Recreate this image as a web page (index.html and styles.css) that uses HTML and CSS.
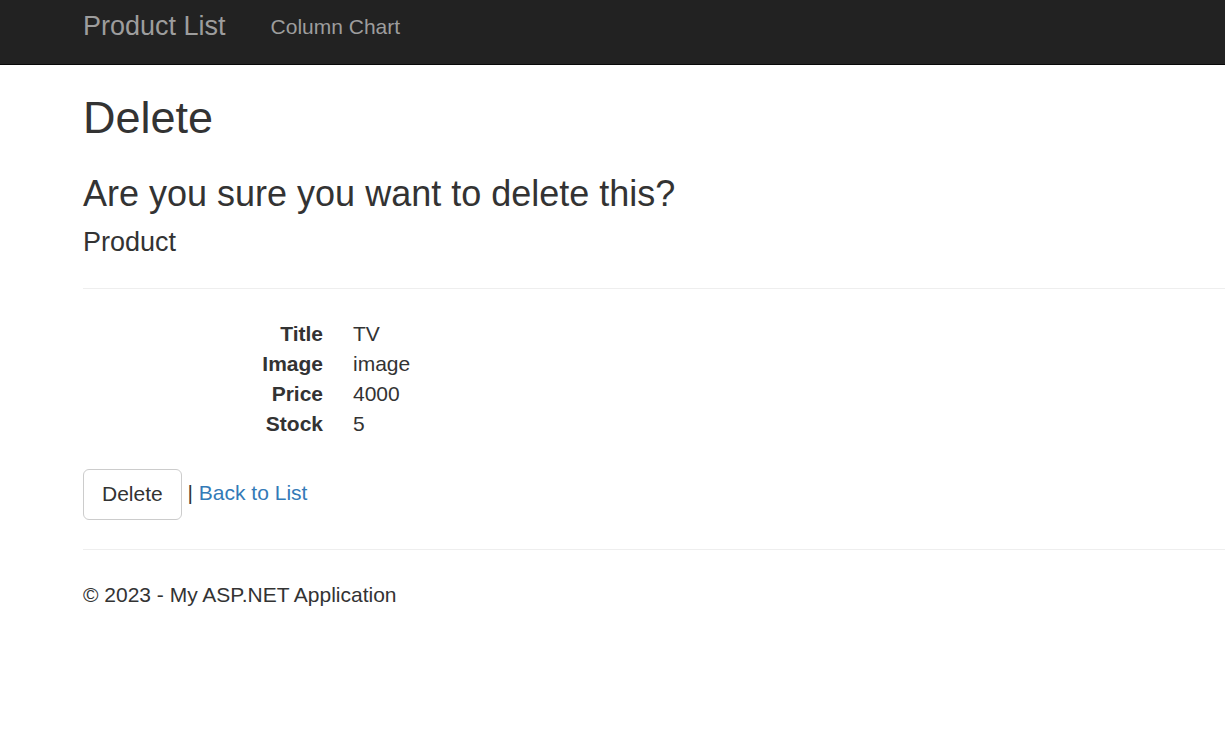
FILE: index.html
```html
<!DOCTYPE html>
<html>
<head>
<meta charset="utf-8">
<title>Delete</title>
<link rel="stylesheet" href="styles.css">
</head>
<body>
<div class="navbar">
  <div class="nav-inner">
    <a class="brand" href="#">Product List</a>
    <a class="nav-link" href="#">Column Chart</a>
  </div>
</div>
<div class="body-content">
  <h2 class="title">Delete</h2>
  <h3 class="question">Are you sure you want to delete this?</h3>
  <div>
    <h4 class="entity">Product</h4>
    <hr class="rule">
    <dl class="details">
      <dt>Title</dt><dd>TV</dd>
      <dt>Image</dt><dd>image</dd>
      <dt>Price</dt><dd>4000</dd>
      <dt>Stock</dt><dd>5</dd>
    </dl>
    <form class="actions">
      <button type="button" class="btn">Delete</button> | <a class="link" href="#">Back to List</a>
    </form>
  </div>
  <hr class="rule rule-footer">
  <footer class="footer">
    <p>&copy; 2023 - My ASP.NET Application</p>
  </footer>
</div>
</body>
</html>
```

FILE: styles.css
```css
* { box-sizing: border-box; }
html, body { margin: 0; padding: 0; }
body {
  font-family: "Liberation Sans", Arial, Helvetica, sans-serif;
  font-size: 21px;
  line-height: 30px;
  color: #333;
  background: #fff;
}
.navbar {
  background: #222;
  height: 65px;
  border-bottom: 1px solid #080808;
}
.nav-inner {
  display: flex;
  align-items: flex-start;
  height: 64px;
  padding-left: 83px;
  padding-top: 11px;
}
.brand {
  font-size: 27px;
  line-height: 30px;
  color: #9d9d9d;
  text-decoration: none;
  padding-right: 22.5px;
}
.nav-link {
  font-size: 21px;
  line-height: 30px;
  color: #9d9d9d;
  text-decoration: none;
  padding: 0 22.5px;
  margin-top: 1px;
}
.body-content {
  padding-left: 83px;
  padding-top: 1px;
}
h2, h3, h4 { font-weight: 500; color: #333; }
.title {
  font-size: 45px;
  line-height: 49.5px;
  margin: 27px 0 15px;
}
.question {
  font-size: 36px;
  line-height: 39.6px;
  margin: 31px 0 15px;
}
.entity {
  font-size: 27px;
  line-height: 29.7px;
  margin: 15px 0 15px;
}
.rule {
  border: 0;
  border-top: 1px solid #eee;
  margin: 30px 0;
  height: 0;
}
.rule-footer { margin-top: 29px; }
.details {
  display: grid;
  grid-template-columns: 240px 1fr;
  column-gap: 30px;
  margin: 0 0 30px;
}
.details dt {
  font-weight: bold;
  text-align: right;
}
.details dd { margin: 0; }
.actions { margin: 0; }
.btn {
  font-family: inherit;
  font-size: 21px;
  line-height: 30px;
  color: #333;
  background: #fff;
  border: 1px solid #ccc;
  border-radius: 6px;
  padding: 9px 18px;
  height: 51px;
  vertical-align: middle;
  margin: 0;
}
.link {
  color: #337ab7;
  text-decoration: none;
}
.footer p { margin: 0 0 15px; }
```
